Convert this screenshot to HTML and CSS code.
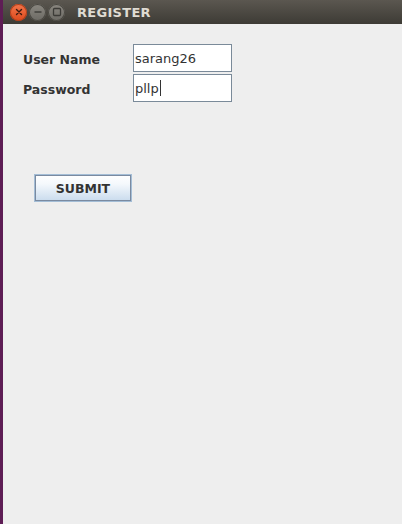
FILE: index.html
```html
<!DOCTYPE html>
<html>
<head>
<meta charset="utf-8">
<link rel="stylesheet" href="styles.css">
</head>
<body>
<div class="window">
  <div class="titlebar">
    <span class="wbtn close"><svg width="10" height="10" viewBox="0 0 10 10"><path d="M2.5 2.5L7.5 7.5M7.5 2.5L2.5 7.5" stroke="#3a1a10" stroke-width="1.4" stroke-linecap="round"/></svg></span>
    <span class="wbtn"><svg width="10" height="10" viewBox="0 0 10 10"><path d="M1.5 5H8.5" stroke="#3c3b37" stroke-width="1.4"/></svg></span>
    <span class="wbtn"><svg width="10" height="10" viewBox="0 0 10 10"><rect x="1.5" y="1.5" width="7" height="7" rx="1" fill="none" stroke="#3c3b37" stroke-width="1.3"/></svg></span>
    <span class="title">REGISTER</span>
  </div>
  <div class="content">
    <div class="form">
      <div class="row">
        <label class="label">User Name</label>
        <div class="field">sarang26</div>
      </div>
      <div class="row">
        <label class="label">Password</label>
        <div class="field">pllp<span class="caret"></span></div>
      </div>
    </div>
    <button class="submit">SUBMIT</button>
  </div>
</div>
</body>
</html>
```
FILE: styles.css
```css
html, body {
  margin: 0;
  padding: 0;
  height: 100%;
  background: #eeeeee;
}
.window {
  height: 524px;
  display: flex;
  flex-direction: column;
  border-left: 3px solid #5e1d55;
  box-sizing: border-box;
}
.titlebar {
  height: 24px;
  flex: none;
  background: linear-gradient(#5b5750, #3d3b35);
  display: flex;
  align-items: center;
  padding-left: 7px;
  gap: 2px;
}
.wbtn {
  width: 17px;
  height: 17px;
  border-radius: 50%;
  background: linear-gradient(#8a8780, #6c6a64);
  box-shadow: inset 0 0 0 1px #4a4842;
  display: flex;
  align-items: center;
  justify-content: center;
}
.wbtn.close {
  background: linear-gradient(#f2764b, #dd4a1d);
  box-shadow: inset 0 0 0 1px #b0401c;
}
.title {
  margin-left: 10px;
  font-family: "DejaVu Sans", sans-serif;
  font-weight: bold;
  font-size: 13px;
  color: #dfdbd2;
  letter-spacing: 0.3px;
}
.content {
  flex: 1;
  background: #eeeeee;
  font-family: "DejaVu Sans", sans-serif;
  font-size: 12px;
  color: #333333;
}
.form {
  padding-top: 20px;
  padding-left: 20px;
  display: flex;
  flex-direction: column;
  gap: 2px;
}
.row {
  display: flex;
  align-items: center;
}
.label {
  width: 110px;
  font-weight: bold;
  font-size: 12.5px;
  color: #333333;
  padding-top: 3px;
}
.field {
  width: 96px;
  height: 26px;
  border: 1px solid #7a8a99;
  background: #ffffff;
  font-size: 13px;
  color: #333333;
  padding-left: 1px;
  display: flex;
  align-items: center;
  box-sizing: content-box;
}
.caret {
  display: inline-block;
  width: 1px;
  height: 16px;
  background: #333;
  margin-left: 1px;
}
.submit {
  margin-top: 72px;
  margin-left: 31px;
  width: 98px;
  height: 28px;
  border: 1px solid #a3bdd6;
  box-shadow: inset 0 0 0 1px #7a8aa0;
  background: linear-gradient(#ffffff 0%, #f4f8fc 35%, #c9dbed 100%);
  font-family: "DejaVu Sans", sans-serif;
  font-weight: bold;
  font-size: 12.5px;
  color: #333333;
  padding: 0;
  display: block;
}
```
